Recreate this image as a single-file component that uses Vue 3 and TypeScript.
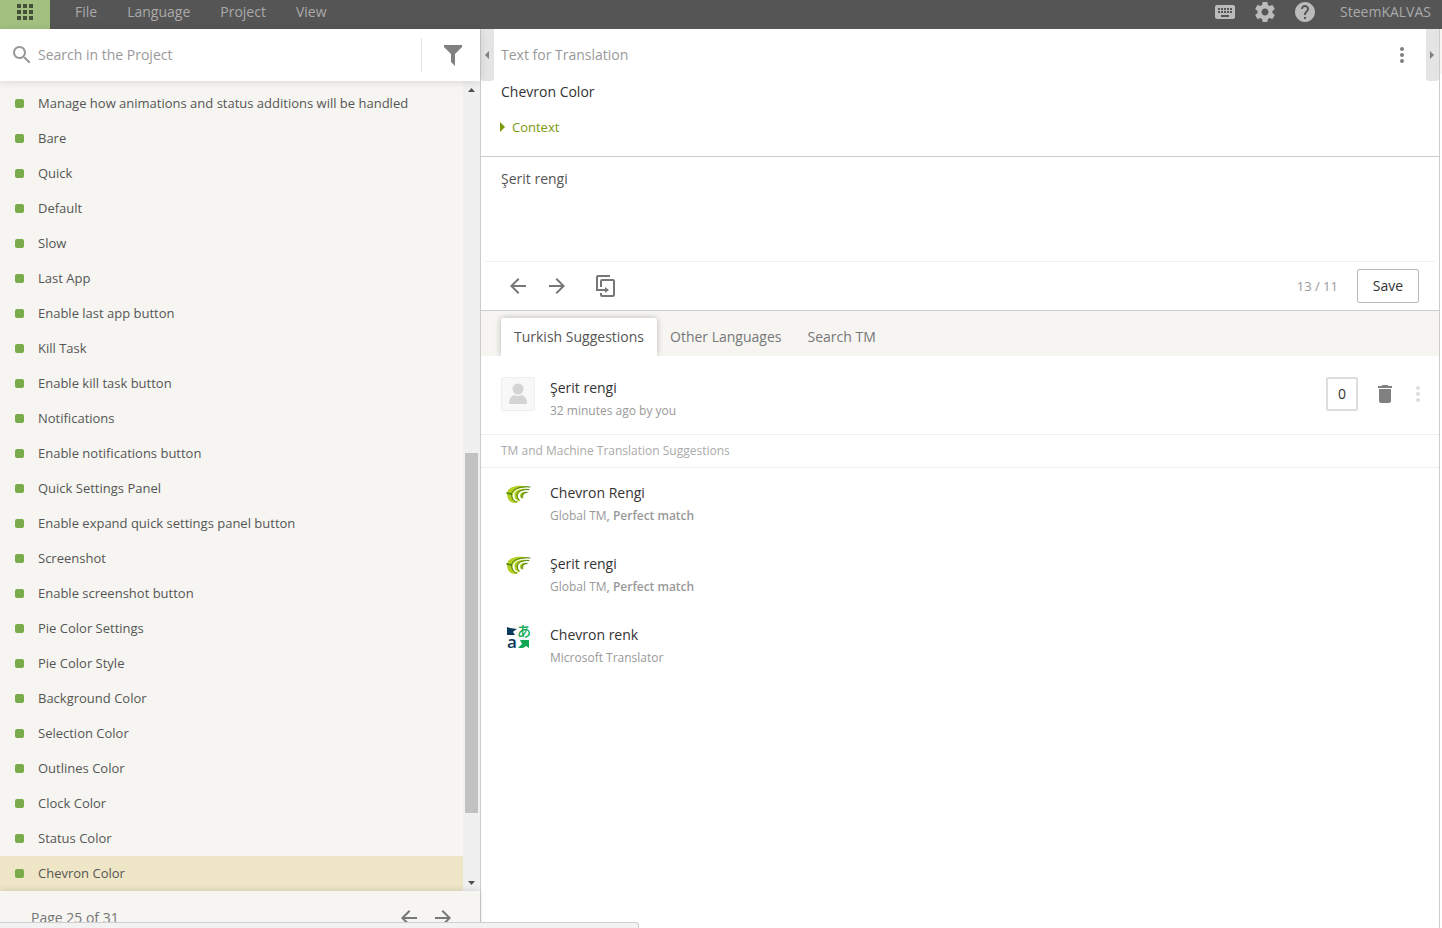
<script setup lang="ts">
import { ref } from 'vue'

interface Suggestion {
  id: number
  text: string
  source: string
  match?: string
  logo: 'crowdin' | 'microsoft'
}

const menus = ['File', 'Language', 'Project', 'View']

const strings = [
  'Manage how animations and status additions will be handled',
  'Bare',
  'Quick',
  'Default',
  'Slow',
  'Last App',
  'Enable last app button',
  'Kill Task',
  'Enable kill task button',
  'Notifications',
  'Enable notifications button',
  'Quick Settings Panel',
  'Enable expand quick settings panel button',
  'Screenshot',
  'Enable screenshot button',
  'Pie Color Settings',
  'Pie Color Style',
  'Background Color',
  'Selection Color',
  'Outlines Color',
  'Clock Color',
  'Status Color',
  'Chevron Color',
]

const tabs = ['Turkish Suggestions', 'Other Languages', 'Search TM']

const suggestions: Suggestion[] = [
  { id: 1, text: 'Chevron Rengi', source: 'Global TM', match: 'Perfect match', logo: 'crowdin' },
  { id: 2, text: 'Şerit rengi', source: 'Global TM', match: 'Perfect match', logo: 'crowdin' },
  { id: 3, text: 'Chevron renk', source: 'Microsoft Translator', logo: 'microsoft' },
]

const selected = ref(strings.length - 1)
const activeTab = ref(0)
const search = ref('')
const translation = ref('Şerit rengi')
</script>

<template>
  <div class="app">
    <header class="topbar">
      <button class="apps" type="button" aria-label="Apps">
        <svg width="16" height="16" viewBox="0 0 16 16" fill="currentColor">
          <path d="M0 0h4v4H0zM6 0h4v4H6zM12 0h4v4h-4zM0 6h4v4H0zM6 6h4v4H6zM12 6h4v4h-4zM0 12h4v4H0zM6 12h4v4H6zM12 12h4v4h-4z" />
        </svg>
      </button>
      <nav class="menus">
        <button v-for="menu in menus" :key="menu" type="button">{{ menu }}</button>
      </nav>
      <div class="tools">
        <button type="button" aria-label="Keyboard shortcuts">
          <svg class="icon" viewBox="0 0 24 24"><path d="M20 5H4c-1.1 0-1.99.9-1.99 2L2 17c0 1.1.9 2 2 2h16c1.1 0 2-.9 2-2V7c0-1.1-.9-2-2-2zm-9 3h2v2h-2V8zm0 3h2v2h-2v-2zM8 8h2v2H8V8zm0 3h2v2H8v-2zm-1 2H5v-2h2v2zm0-3H5V8h2v2zm9 7H8v-2h8v2zm0-4h-2v-2h2v2zm0-3h-2V8h2v2zm3 3h-2v-2h2v2zm0-3h-2V8h2v2z" /></svg>
        </button>
        <button type="button" aria-label="Settings">
          <svg class="icon" viewBox="0 0 24 24"><path d="M19.43 12.98c.04-.32.07-.64.07-.98s-.03-.66-.07-.98l2.11-1.65c.19-.15.24-.42.12-.64l-2-3.46c-.12-.22-.39-.3-.61-.22l-2.49 1c-.52-.4-1.08-.73-1.69-.98l-.38-2.65C14.46 2.18 14.25 2 14 2h-4c-.25 0-.46.18-.49.42l-.38 2.65c-.61.25-1.17.59-1.69.98l-2.49-1c-.23-.09-.49 0-.61.22l-2 3.46c-.13.22-.07.49.12.64l2.11 1.65c-.04.32-.07.65-.07.98s.03.66.07.98l-2.11 1.65c-.19.15-.24.42-.12.64l2 3.46c.12.22.39.3.61.22l2.49-1c.52.4 1.08.73 1.69.98l.38 2.65c.03.24.24.42.49.42h4c.25 0 .46-.18.49-.42l.38-2.65c.61-.25 1.17-.59 1.69-.98l2.49 1c.23.09.49 0 .61-.22l2-3.46c.12-.22.07-.49-.12-.64l-2.11-1.65zM12 15.5c-1.93 0-3.5-1.57-3.5-3.5s1.57-3.5 3.5-3.5 3.5 1.57 3.5 3.5-1.57 3.5-3.5 3.5z" /></svg>
        </button>
        <button type="button" aria-label="Help">
          <svg class="icon" viewBox="0 0 24 24"><path d="M12 2C6.48 2 2 6.48 2 12s4.48 10 10 10 10-4.48 10-10S17.52 2 12 2zm1 17h-2v-2h2v2zm2.07-7.75l-.9.92C13.45 12.9 13 13.5 13 15h-2v-.5c0-1.1.45-2.1 1.17-2.83l1.24-1.26c.37-.36.59-.86.59-1.41 0-1.1-.9-2-2-2s-2 .9-2 2H8c0-2.21 1.79-4 4-4s4 1.79 4 4c0 .88-.36 1.68-.93 2.25z" /></svg>
        </button>
      </div>
      <button class="user" type="button">SteemKALVAS</button>
    </header>

    <div class="body">
      <aside class="sidebar">
        <div class="search">
          <label for="search" aria-label="Search">
            <svg class="icon" viewBox="0 0 24 24"><path d="M15.5 14h-.79l-.28-.27C15.41 12.59 16 11.11 16 9.5 16 5.91 13.09 3 9.5 3S3 5.91 3 9.5 5.91 16 9.5 16c1.61 0 3.09-.59 4.23-1.57l.27.28v.79l5 4.99L20.49 19l-4.99-5zm-6 0C7.01 14 5 11.99 5 9.5S7.01 5 9.5 5 14 7.01 14 9.5 11.99 14 9.5 14z" /></svg>
          </label>
          <input id="search" v-model="search" type="text" placeholder="Search in the Project" />
          <button class="filter" type="button" aria-label="Filter">
            <svg width="18" height="21" viewBox="0 0 18 21" fill="currentColor"><path d="M0 0h18v2l-7 7v12l-4-4V9L0 2z" /></svg>
          </button>
        </div>

        <div class="list-area">
          <ul class="strings">
            <li v-for="(text, index) in strings" :key="text">
              <button type="button" :class="{ selected: index === selected }" @click="selected = index">
                <span class="bullet"></span>{{ text }}
              </button>
            </li>
          </ul>
          <div class="scrollbar" aria-hidden="true">
            <svg width="17" height="17" viewBox="0 0 17 17" fill="#505050"><path d="M8.500 7L12 11H5z" /></svg>
            <div class="track"><div class="thumb"></div></div>
            <svg width="17" height="17" viewBox="0 0 17 17" fill="#505050"><path d="M5 7h7l-3.500 4z" /></svg>
          </div>
        </div>

        <footer class="pager">
          <span>Page 25 of 31</span>
          <button type="button" aria-label="Previous page">
            <svg class="icon" viewBox="0 0 24 24"><path d="M20 11H7.830l5.590-5.590L12 4l-8 8 8 8 1.410-1.410L7.830 13H20v-2z" /></svg>
          </button>
          <button type="button" aria-label="Next page">
            <svg class="icon" viewBox="0 0 24 24"><path d="M12 4l-1.410 1.410L16.170 11H4v2h12.170l-5.580 5.590L12 20l8-8z" /></svg>
          </button>
        </footer>
      </aside>

      <main class="editor">
        <div class="heading">
          <button class="handle" type="button" aria-label="Collapse left panel">
            <svg width="5" height="8" viewBox="0 0 5 8" fill="currentColor"><path d="M4 0v8L0 4z" /></svg>
          </button>
          <h1>Text for Translation</h1>
          <button class="more" type="button" aria-label="More">
            <svg class="icon" viewBox="0 0 24 24"><circle cx="12" cy="6" r="2" /><circle cx="12" cy="12" r="2" /><circle cx="12" cy="18" r="2" /></svg>
          </button>
          <button class="handle" type="button" aria-label="Collapse right panel">
            <svg width="5" height="8" viewBox="0 0 5 8" fill="currentColor"><path d="M0 0v8l4-4z" /></svg>
          </button>
        </div>

        <section class="source">
          <p>Chevron Color</p>
          <button type="button">
            <svg width="5" height="10" viewBox="0 0 5 10" fill="currentColor"><path d="M0 0v10l5-5z" /></svg>
            Context
          </button>
        </section>

        <section class="target">
          <textarea v-model="translation" aria-label="Translation"></textarea>
          <div class="actions">
            <button type="button" aria-label="Previous string">
              <svg class="icon" viewBox="0 0 24 24"><path d="M20 11H7.830l5.590-5.590L12 4l-8 8 8 8 1.410-1.410L7.830 13H20v-2z" /></svg>
            </button>
            <button type="button" aria-label="Next string">
              <svg class="icon" viewBox="0 0 24 24"><path d="M12 4l-1.410 1.410L16.170 11H4v2h12.170l-5.580 5.590L12 20l8-8z" /></svg>
            </button>
            <button class="copy" type="button" aria-label="Copy source">
              <svg width="20" height="22" viewBox="0 0 20 22" fill="none" stroke="currentColor" stroke-width="2">
                <path d="M14 1H2Q1 1 1 2v13h9" />
                <path d="M5 12V6Q5 5 6 5h11q1 0 1 1v14q0 1-1 1H6q-1 0-1-1v-2" />
                <path d="M9 12l4 3-4 3z" fill="currentColor" stroke="none" />
              </svg>
            </button>
            <span class="count">13 / 11</span>
            <button class="save" type="button">Save</button>
          </div>
        </section>

        <div class="tabs" role="tablist">
          <button
            v-for="(tab, index) in tabs"
            :key="tab"
            type="button"
            role="tab"
            :aria-selected="index === activeTab"
            :class="{ active: index === activeTab }"
            @click="activeTab = index"
          >{{ tab }}</button>
        </div>

        <article class="suggestion own">
          <div class="avatar">
            <svg width="20" height="22" viewBox="0 0 20 22" fill="#d4d4d4"><circle cx="10" cy="6" r="5.500" /><path d="M1 21q0-7 5-9 4 2 8 0 5 2 5 9z" /></svg>
          </div>
          <div class="words">
            <p>Şerit rengi</p>
            <small>32 minutes ago by you</small>
          </div>
          <button class="vote" type="button">0</button>
          <button class="delete" type="button" aria-label="Delete">
            <svg class="icon" viewBox="0 0 24 24"><path d="M6 19c0 1.100.9 2 2 2h8c1.100 0 2-.9 2-2V7H6v12zM19 4h-3.500l-1-1h-5l-1 1H5v2h14V4z" /></svg>
          </button>
          <button class="faded" type="button" aria-label="More options">
            <svg class="icon" viewBox="0 0 24 24"><circle cx="12" cy="6" r="2" /><circle cx="12" cy="12" r="2" /><circle cx="12" cy="18" r="2" /></svg>
          </button>
        </article>

        <h2>TM and Machine Translation Suggestions</h2>

        <article v-for="item in suggestions" :key="item.id" class="suggestion">
          <div class="logo">
            <svg v-if="item.logo === 'crowdin'" width="24" height="22" viewBox="0 -2 24 22">
              <path d="M23 2C12-1 0 1 0 9c0 6 4 9 8 9l4-1C6 16 5 12 6 9 8 4 14 2 23 2z" fill="#b4cf20" />
              <path d="M22 4C14 3 7 5 7.500 10c0 4 2 6 6 6-3-3-3-5-2-7 2-3 5-4 10.500-5z" fill="#b4cf20" />
              <path d="M21 7c-5-1-8 1-8 3.500 0 2 1 3 3.500 3-1-3 0-5 4.500-6.500z" fill="#a5c520" />
              <g fill="none" stroke="#4d8018" stroke-linecap="round">
                <path d="M23 2C13 1 5 4 4.500 9c0 4 1.500 7 5 8" />
                <path d="M22 4.500C15 4.500 10 6 10 10q0 3 2 5" />
                <path d="M20 7.500q-6 0-5 5" />
                <path d="M0 8l4 1" stroke-width="1.500" />
              </g>
            </svg>
            <svg v-else width="24" height="28" viewBox="0 0 24 28">
              <path d="M0 2l3 1 7 1-3 2-1 1 2 3H0z" fill="#0a3a5c" />
              <text x="0" y="23" class="latin">a</text>
              <text x="10" y="11" class="kana">あ</text>
              <path d="M13 15h9v8l-3-2-3 2h-5l4-4z" fill="#0ca750" />
            </svg>
          </div>
          <div class="words">
            <p>{{ item.text }}</p>
            <small>{{ item.source }}<b v-if="item.match">, {{ item.match }}</b></small>
          </div>
        </article>
      </main>
      <div class="edge"><div></div></div>
    </div>

    <div class="status"></div>
  </div>
</template>

<style>
body {
  margin: 0;
  overflow: hidden;
}
</style>

<style scoped>
.app {
  position: relative;
  display: flex;
  flex-direction: column;
  height: 100vh;
  overflow: hidden;
  background: #fff;
  color: #333;
  font-family: "Open Sans", "Noto Sans", sans-serif;
  font-size: 14px;
  line-height: 20px;
}

button {
  margin: 0;
  padding: 0;
  border: 0;
  background: none;
  color: inherit;
  font: inherit;
  cursor: pointer;
}

svg {
  display: block;
}

p,
h1,
h2,
ul {
  margin: 0;
  padding: 0;
  font-size: 14px;
  font-weight: 400;
}

.icon {
  width: 24px;
  height: 24px;
  fill: currentColor;
}

.topbar {
  display: flex;
  flex: none;
  height: 29px;
  background: #555;
  color: #aaa;
}

.topbar > * {
  height: 24px;
}

.topbar .apps {
  display: flex;
  justify-content: center;
  align-items: center;
  width: 50px;
  height: 29px;
  padding-bottom: 5px;
  background: #a3c080;
  color: #444f38;
}

.menus {
  display: flex;
  flex: 1;
  gap: 30px;
  padding-left: 25px;
}

.tools {
  display: flex;
  gap: 16px;
  color: #bbb;
}

.user {
  margin: 0 11px 0 23px;
}

.body {
  display: flex;
  flex: 1;
  min-height: 0;
}

.sidebar {
  display: flex;
  flex-direction: column;
  flex: none;
  width: 480px;
  border-right: 1px solid #ccccc8;
  background: #f6f5f1;
}

.search {
  position: relative;
  z-index: 1;
  display: flex;
  align-items: center;
  flex: none;
  height: 52px;
  padding-left: 10px;
  background: #fff;
  color: #999;
  box-shadow: 0 1px 8px rgba(0, 0, 0, 0.12);
}

.search input {
  box-sizing: border-box;
  flex: 1;
  min-width: 0;
  height: 34px;
  margin-left: 4px;
  padding: 0 0 2px;
  border: 0;
  outline: 0;
  background: none;
  color: #333;
  font: inherit;
}

.search input::placeholder {
  color: #999;
  opacity: 1;
}

.filter {
  display: flex;
  align-items: center;
  width: 59px;
  height: 34px;
  padding-left: 22px;
  border-left: 1px solid #e4e4e4;
  color: #808080;
}

.list-area {
  display: flex;
  flex: none;
}

.strings {
  flex: 1;
  padding-top: 5px;
  list-style: none;
}

.strings button {
  display: flex;
  align-items: center;
  width: 100%;
  height: 35px;
  padding: 0 0 1px 15px;
  color: #555;
  font-size: 13px;
  text-align: left;
}

.strings .selected {
  background: #efe6c7;
}

.bullet {
  width: 9px;
  height: 9px;
  margin: 1px 14px 0 0;
  border-radius: 2px;
  background: #7aab4a;
}

.scrollbar {
  display: flex;
  flex-direction: column;
  width: 17px;
  background: #f0f0f0;
}

.track {
  display: grid;
  flex: 1;
  grid-template-rows: 355fr 360fr 61fr;
  padding: 0 2px;
}

.thumb {
  grid-row: 2;
  background: #c1c1c1;
}

.pager {
  position: relative;
  display: flex;
  flex: 1;
  align-items: flex-start;
  gap: 10px;
  padding: 15px 25px 0 31px;
  color: #777;
  line-height: 24px;
  background: #f6f5f1;
  box-shadow: 0 -1px 6px rgba(0, 0, 0, 0.12);
}

.pager span {
  flex: 1;
}

.editor {
  flex: 1;
  min-width: 0;
  border-right: 1px solid #ccc;
}

.heading {
  display: flex;
  align-items: center;
  height: 52px;
  color: #999;
}

.heading h1 {
  flex: 1;
  margin-left: 7px;
}

.handle {
  display: flex;
  align-items: center;
  justify-content: center;
  width: 13px;
  height: 52px;
  border-radius: 0 0 3px 3px;
  background: #e4e4e4;
  color: #808080;
}

.more {
  margin-right: 12px;
  color: #808080;
}

.source {
  box-sizing: border-box;
  height: 76px;
  padding: 1px 0 0 19px;
  border-bottom: 1px solid #ccc;
}

.source p {
  padding-left: 1px;
}

.source button {
  display: flex;
  align-items: center;
  gap: 7px;
  margin-top: 15px;
  color: #7b9a0c;
  font-size: 13px;
}

.target {
  padding: 0 5px;
  border-bottom: 1px solid #ccc;
}

.target textarea {
  display: block;
  box-sizing: border-box;
  width: 100%;
  height: 104px;
  padding: 12px 15px;
  border: 0;
  outline: 0;
  resize: none;
  color: #555;
  font: inherit;
}

.actions {
  display: flex;
  align-items: center;
  height: 48px;
  padding: 0 15px 0 20px;
  border-top: 1px solid #eee;
  color: #777;
}

.actions .icon {
  margin-right: 15px;
}

.copy {
  margin-left: 12px;
}

.count {
  flex: 1;
  margin-right: 19px;
  color: #999;
  font-size: 13px;
  text-align: right;
}

.actions .save {
  box-sizing: border-box;
  width: 62px;
  height: 34px;
  border: 1px solid #bbb;
  border-radius: 2px;
  color: #333;
}

.tabs {
  display: flex;
  align-items: flex-end;
  height: 45px;
  padding-left: 20px;
  overflow: hidden;
  background: #f6f5f1;
  color: #777;
}

.tabs button {
  height: 38px;
  padding: 0 13px;
}

.tabs .active {
  border-radius: 2px 2px 0 0;
  background: #fff;
  color: #555;
  box-shadow: 0 0 6px rgba(0, 0, 0, 0.25);
}

.suggestion {
  display: flex;
  padding: 15px 9px 0 20px;
  height: 56px;
}

.suggestion.own {
  height: 57px;
  padding-top: 21px;
  border-bottom: 1px solid #eee;
}

.own .words {
  padding-top: 1px;
}

.avatar {
  display: flex;
  align-items: center;
  justify-content: center;
  box-sizing: border-box;
  width: 34px;
  height: 34px;
  border: 1px solid #eee;
  border-radius: 2px;
  background: #f8f8f8;
}

.logo {
  width: 28px;
  padding-left: 6px;
}

.logo svg {
  overflow: visible;
}

.latin {
  fill: #0a3a5c;
  font: 600 17px "Open Sans", sans-serif;
}

.kana {
  fill: #0ca750;
  font: 500 14px "Noto Sans CJK JP", sans-serif;
}

.words {
  flex: 1;
  margin-left: 15px;
}

.words small {
  display: block;
  margin-top: 3px;
  color: #999;
  font-size: 12px;
}

.words b {
  font-weight: 600;
}

.vote {
  box-sizing: border-box;
  width: 32px;
  height: 34px;
  border: 2px solid #ddd;
  border-radius: 2px;
}

.delete {
  height: 34px;
  margin: 0 9px 0 15px;
  color: #808080;
}

.faded {
  height: 34px;
  color: #ddd;
}

h2 {
  height: 32px;
  padding-left: 20px;
  border-bottom: 1px solid #eee;
  color: #aaa;
  font-size: 12px;
  line-height: 32px;
}

.edge {
  width: 2px;
}

.edge div {
  height: 45px;
  background: #f6f5f1;
}

.status {
  position: absolute;
  bottom: 0;
  left: 0;
  width: 638px;
  height: 5px;
  border-top: 1px solid #d0d0d0;
  border-right: 1px solid #d0d0d0;
  border-radius: 0 3px 0 0;
  background: #f2f2f2;
}
</style>
